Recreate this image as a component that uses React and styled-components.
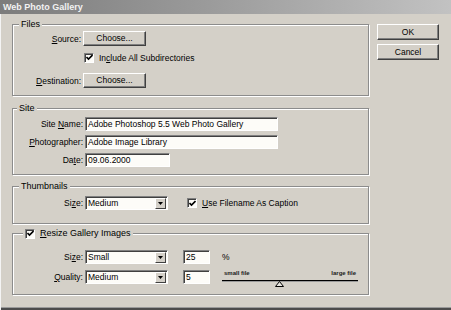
import React from "react";
import styled, { createGlobalStyle } from "styled-components";

const Global = createGlobalStyle`
  html, body { margin: 0; padding: 0; background: #d4d0c8; }
  body { font-family: "Liberation Sans", Arial, sans-serif; font-size: 8.5px; color: #000; }
`;

const Window = styled.div`
  width: 451px;
  height: 310px;
  background: #d4d0c8;
  display: flex;
  flex-direction: column;
  box-shadow: inset 1px 0 0 #f4f4f4, inset 0 -2px 0 #4c4c4c, inset 0 -3px 0 #9a9a9a;
  overflow: hidden;
`;

const TitleBar = styled.div`
  height: 14px;
  background: linear-gradient(to right, #7c7c7c 0%, #9a9a9a 45%, #c2c2c2 100%);
  color: #f2f2f2;
  font-weight: bold;
  font-size: 9px;
  line-height: 14px;
  padding-left: 3px;
  white-space: nowrap;
`;

const Content = styled.div`
  display: flex;
  padding: 10px 0 0 12px;
  gap: 8px;
`;

const Main = styled.div`
  width: 357px;
  display: flex;
  flex-direction: column;
`;

const Side = styled.div`
  display: flex;
  flex-direction: column;
  gap: 4px;
`;

const Group = styled.div`
  position: relative;
  box-sizing: border-box;
  height: ${(p) => p.$h}px;
  margin-top: ${(p) => p.$mt || 0}px;
  border: 1px solid #8c8c8c;
  box-shadow: inset 1px 1px 0 #fff, 1px 1px 0 #fff;
  padding: ${(p) => p.$pad};
  display: flex;
  flex-direction: column;
`;

const GroupLabel = styled.div`
  position: absolute;
  top: -7px;
  left: ${(p) => p.$left || 6}px;
  padding: 0 2px;
  background: #d4d0c8;
  line-height: 13px;
  font-size: 9px;
  display: flex;
  align-items: center;
  gap: 5px;
`;

const Row = styled.div`
  display: flex;
  align-items: center;
  height: ${(p) => p.$h || 14}px;
  margin-top: ${(p) => p.$mt || 0}px;
`;

const Label = styled.div`
  width: ${(p) => p.$w}px;
  margin-right: 2px;
  text-align: right;
  white-space: nowrap;
`;

const Button = styled.button`
  box-sizing: border-box;
  width: ${(p) => p.$w}px;
  height: ${(p) => p.$h}px;
  padding: 0;
  font-family: inherit;
  font-size: 8.5px;
  color: #000;
  background: #d4d0c8;
  border: 1px solid;
  border-color: #fff #404040 #404040 #fff;
  box-shadow: inset -1px -1px 0 #808080;
  text-align: center;
  line-height: 13px;
`;

const TextBox = styled.div`
  box-sizing: border-box;
  width: ${(p) => p.$w}px;
  height: 14px;
  background: #fdfcf8;
  border: 1px solid;
  border-color: #808080 #fff #fff #808080;
  box-shadow: inset 1px 1px 0 #404040;
  padding: 0 0 0 2px;
  line-height: 12px;
  white-space: nowrap;
  overflow: hidden;
  margin-left: ${(p) => p.$ml || 0}px;
`;

const SelectBox = styled.div`
  box-sizing: border-box;
  width: ${(p) => p.$w}px;
  height: 14px;
  background: #fdfcf8;
  border: 1px solid;
  border-color: #808080 #fff #fff #808080;
  box-shadow: inset 1px 1px 0 #404040;
  display: flex;
  align-items: stretch;
  padding: 1px 1px 0 2px;
`;

const SelectText = styled.div`
  flex: 1;
  line-height: 11px;
  white-space: nowrap;
  overflow: hidden;
`;

const ArrowBtn = styled.div`
  box-sizing: border-box;
  width: 11px;
  background: #d4d0c8;
  border: 1px solid;
  border-color: #fff #404040 #404040 #fff;
  display: flex;
  align-items: center;
  justify-content: center;
`;

const CheckBox = styled.div`
  box-sizing: border-box;
  width: 10px;
  height: 10px;
  background: #fdfcf8;
  border: 1px solid;
  border-color: #808080 #fff #fff #808080;
  box-shadow: inset 1px 1px 0 #404040;
  display: flex;
  align-items: center;
  justify-content: center;
  margin-left: ${(p) => p.$ml || 0}px;
  margin-right: ${(p) => (p.$mr === undefined ? 5 : p.$mr)}px;
  flex: none;
`;

const Unit = styled.div`
  margin-left: 12px;
`;

const Slider = styled.div`
  position: relative;
  width: 136px;
  margin-left: 12px;
  align-self: flex-start;
  height: 18px;
  display: flex;
  flex-direction: column;
`;

const SliderLabels = styled.div`
  display: flex;
  justify-content: space-between;
  font-size: 6px;
  font-weight: bold;
  line-height: 7px;
  padding: 0 2px;
  color: #202020;
`;

const Track = styled.div`
  margin-top: 3px;
  height: 1px;
  background: #000;
  box-shadow: 0 1px 0 #9a9a9a;
`;

const Thumb = styled.svg`
  position: absolute;
  top: 11px;
  margin-left: -4px;
`;

const Arrow = () => (
  <svg width="5" height="3" viewBox="0 0 5 3">
    <path d="M0 0h5L2.5 3z" fill="#000" />
  </svg>
);

const Check = () => (
  <svg width="7" height="7" viewBox="0 0 7 7">
    <path d="M0.5 3l2 2 4-4" stroke="#000" strokeWidth="1.6" fill="none" />
  </svg>
);

const Select = ({ w, children }) => (
  <SelectBox $w={w}>
    <SelectText>{children}</SelectText>
    <ArrowBtn>
      <Arrow />
    </ArrowBtn>
  </SelectBox>
);

export default function App() {
  const quality = 5;
  return (
    <>
      <Global />
      <Window>
        <TitleBar>Web Photo Gallery</TitleBar>
        <Content>
          <Main>
            <Group $h={72} $pad="6px 0 0 0">
              <GroupLabel>Files</GroupLabel>
              <Row $h={15}>
                <Label $w={68}>
                  <u>S</u>ource:
                </Label>
                <Button $w={63} $h={15}>
                  Choose...
                </Button>
              </Row>
              <Row $h={13} $mt={5}>
                <CheckBox $ml={71}>
                  <Check />
                </CheckBox>
                In<u>c</u>lude All Subdirectories
              </Row>
              <Row $h={15} $mt={9}>
                <Label $w={68}>
                  <u>D</u>estination:
                </Label>
                <Button $w={63} $h={15}>
                  Choose...
                </Button>
              </Row>
            </Group>

            <Group $h={67} $mt={12} $pad="8px 0 0 0">
              <GroupLabel $left={4}>Site</GroupLabel>
              <Row>
                <Label $w={70}>
                  Site <u>N</u>ame:
                </Label>
                <TextBox $w={193}>Adobe Photoshop 5.5 Web Photo Gallery</TextBox>
              </Row>
              <Row $mt={4}>
                <Label $w={70}>
                  <u>P</u>hotographer:
                </Label>
                <TextBox $w={193}>Adobe Image Library</TextBox>
              </Row>
              <Row $mt={4}>
                <Label $w={70}>
                  Da<u>t</u>e:
                </Label>
                <TextBox $w={85}>09.06.2000</TextBox>
              </Row>
            </Group>

            <Group $h={38} $mt={11} $pad="9px 0 0 0">
              <GroupLabel>Thumbnails</GroupLabel>
              <Row>
                <Label $w={70}>
                  Si<u>z</u>e:
                </Label>
                <Select w={83}>Medium</Select>
                <CheckBox $ml={19}>
                  <Check />
                </CheckBox>
                <span>
                  <u>U</u>se Filename As Caption
                </span>
              </Row>
            </Group>

            <Group $h={62} $mt={9} $pad="16px 0 0 0">
              <GroupLabel $left={10}>
                <CheckBox $mr={0}>
                  <Check />
                </CheckBox>
                <span>
                  <u>R</u>esize Gallery Images
                </span>
              </GroupLabel>
              <Row>
                <Label $w={70}>
                  Si<u>z</u>e:
                </Label>
                <Select w={83}>Small</Select>
                <TextBox $w={27} $ml={15}>
                  25
                </TextBox>
                <Unit>%</Unit>
              </Row>
              <Row $mt={6}>
                <Label $w={70}>
                  <u>Q</u>uality:
                </Label>
                <Select w={83}>Medium</Select>
                <TextBox $w={27} $ml={15}>
                  {quality}
                </TextBox>
                <Slider>
                  <SliderLabels>
                    <span>small file</span>
                    <span>large file</span>
                  </SliderLabels>
                  <Track />
                  <Thumb
                    width="9"
                    height="6"
                    viewBox="0 0 9 6"
                    style={{ left: `${(quality / 12) * 100}%` }}
                  >
                    <path d="M4.5 0.5L8.5 5.5H0.5z" fill="#e8e6e0" stroke="#000" strokeWidth="1" />
                  </Thumb>
                </Slider>
              </Row>
            </Group>
          </Main>
          <Side>
            <Button $w={62} $h={16}>
              OK
            </Button>
            <Button $w={62} $h={16}>
              Cancel
            </Button>
          </Side>
        </Content>
      </Window>
    </>
  );
}
